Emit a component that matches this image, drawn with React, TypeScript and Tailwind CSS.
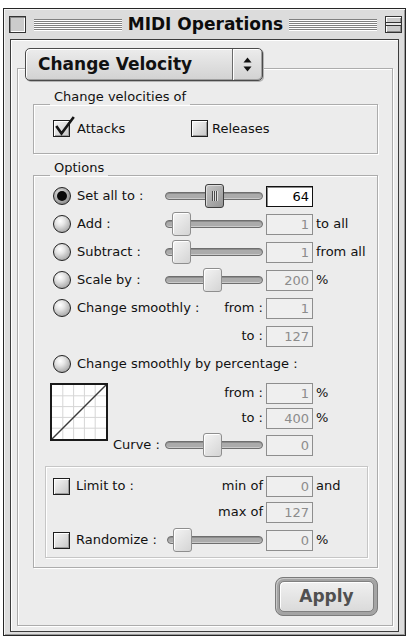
import React from "react";

function Radio({ checked = false }: { checked?: boolean }) {
  return (
    <div
      className={`w-[18px] h-[18px] shrink-0 rounded-full border border-[#222] flex items-center justify-center ${
        checked
          ? "bg-[radial-gradient(circle_at_40%_35%,#e6e6e6_0%,#9a9a9a_65%,#666666_100%)]"
          : "bg-[radial-gradient(circle_at_38%_32%,#ffffff_0%,#e6e6e6_30%,#a8a8a8_78%,#8a8a8a_100%)]"
      }`}
    >
      {checked && <div className="w-[10px] h-[10px] rounded-full bg-[#0a0a0a]" />}
    </div>
  );
}

function Checkbox({ checked = false }: { checked?: boolean }) {
  return (
    <div className="relative w-[17px] h-[17px] shrink-0 border border-[#1e1e1e] bg-[linear-gradient(135deg,#f6f6f6,#c6c6c6)] shadow-[inset_1px_1px_0_#ffffff,inset_-1px_-1px_0_#9a9a9a]">
      {checked && (
        <svg className="absolute left-0 top-[-5px]" width="22" height="22" viewBox="0 0 22 22">
          <path d="M3 11 L7.5 17.5 L19 2" stroke="#151515" strokeWidth="2.6" fill="none" strokeLinecap="square" strokeLinejoin="miter" />
        </svg>
      )}
    </div>
  );
}

function Slider({ pos, active = false, narrow = false }: { pos: number; active?: boolean; narrow?: boolean }) {
  return (
    <div className={`relative h-[24px] flex items-center shrink-0 ${narrow ? "w-[96px]" : "w-[98px]"}`}>
      <div className="w-full h-[8px] rounded-full border border-[#6e6e6e] bg-[#ababab] shadow-[inset_0_1px_0_#8c8c8c,inset_0_-1px_0_#cacaca]" />
      <div
        className={`absolute top-0 h-[24px] w-[19px] rounded-[3px] border flex items-center justify-center gap-[1px] ${
          active
            ? "border-[#3e3e3e] bg-[linear-gradient(135deg,#c6c6c6,#949494)] shadow-[inset_1px_1px_0_#dcdcdc]"
            : "border-[#8e8e8e] bg-[linear-gradient(135deg,#f4f4f4,#d4d4d4)] shadow-[inset_1px_1px_0_#ffffff]"
        }`}
        style={{ left: pos }}
      >
        {active &&
          [0, 1, 2].map((i) => (
            <div key={i} className="w-[1px] h-[10px] bg-[#4a4a4a] shadow-[1px_0_0_#dedede]" />
          ))}
      </div>
    </div>
  );
}

function Field({ v, active = false }: { v: string; active?: boolean }) {
  return (
    <div
      className={`w-[47px] h-[21px] shrink-0 border flex items-center justify-end pr-[3px] leading-none ${
        active
          ? "border-[#111] bg-white text-black shadow-[inset_1px_1px_0_#8a8a8a]"
          : "border-[#8e8e8e] bg-[#efefef] text-[#8c8c8c]"
      }`}
    >
      {v}
    </div>
  );
}

function Stripes() {
  return (
    <div className="flex-1 flex flex-col gap-[1px]">
      {[0, 1, 2, 3, 4, 5].map((i) => (
        <div key={i} className="h-[1px] bg-[#808080] shadow-[0_1px_0_#ffffff]" />
      ))}
    </div>
  );
}

function SliderRow({
  label,
  pos,
  v,
  suffix,
  checked = false,
}: {
  label: string;
  pos: number;
  v: string;
  suffix?: string;
  checked?: boolean;
}) {
  return (
    <div className="flex items-center h-[28px] pl-[19px]">
      <Radio checked={checked} />
      <div className="w-[94px] pl-[6px] whitespace-nowrap">{label}</div>
      <Slider pos={pos} active={checked} />
      <div className="ml-[3px]">
        <Field v={v} active={checked} />
      </div>
      {suffix && <span className="ml-[3px] whitespace-nowrap">{suffix}</span>}
    </div>
  );
}

export default function App() {
  return (
    <div className="min-h-screen bg-white pt-[8px] pl-[3px] font-['DejaVu_Sans',sans-serif] text-[13px] text-[#111]">
      <div className="w-[403px] h-[628px] border border-[#262626] bg-[#dcdcdc] flex flex-col shadow-[inset_1px_1px_0_#f6f6f6,inset_-1px_-1px_0_#9a9a9a]">
        {/* Title bar */}
        <div className="h-[30px] shrink-0 flex items-center pl-[5px] pr-[3px]">
          <div className="w-[17px] h-[17px] shrink-0 border border-[#333] bg-[#cbcbcb] shadow-[inset_1px_1px_0_#8a8a8a,inset_-1px_-1px_0_#ffffff]" />
          <div className="flex-1 ml-[8px] flex">
            <Stripes />
          </div>
          <div className="px-[6px] font-bold text-[17px] leading-none text-[#0c0c0c] whitespace-nowrap">
            MIDI Operations
          </div>
          <div className="flex-1 mr-[8px] flex">
            <Stripes />
          </div>
          <div className="w-[17px] h-[17px] shrink-0 border border-[#333] bg-[#cbcbcb] shadow-[inset_1px_1px_0_#ffffff,inset_-1px_-1px_0_#8a8a8a] flex flex-col justify-center">
            <div className="h-[4px] border-y border-[#333] bg-[#e8e8e8]" />
          </div>
        </div>

        {/* Content */}
        <div className="mx-[6px] mb-[3px] h-[593px] border border-[#3c3c3c] bg-[#ececec] shadow-[inset_1px_1px_0_#ffffff] flex flex-col pt-[8px]">
          {/* Popup */}
          <div className="relative z-10 ml-[14px] w-[238px] h-[33px] shrink-0 rounded-[5px] border border-[#4a4a4a] bg-[linear-gradient(180deg,#ececec,#d2d2d2)] shadow-[inset_1px_1px_0_#ffffff,inset_-1px_-1px_0_#a0a0a0,1px_1px_0_#b4b4b4] flex">
            <div className="flex-1 flex items-center pl-[12px] font-bold text-[17px] leading-none text-[#111] whitespace-nowrap">
              Change Velocity
            </div>
            <div className="w-[30px] border-l border-[#6a6a6a] flex items-center justify-center shadow-[inset_1px_0_0_#ffffff]">
              <svg width="9" height="15" viewBox="0 0 9 15">
                <path d="M4.5 0.5 L8.5 5.5 L0.5 5.5 Z" fill="#111" />
                <path d="M0.5 9.5 L8.5 9.5 L4.5 14.5 Z" fill="#111" />
              </svg>
            </div>
          </div>

          {/* Outer frame */}
          <div className="-mt-[13px] ml-[6px] w-[376px] h-[558px] shrink-0 border border-[#acacac] shadow-[inset_1px_1px_0_#ffffff,1px_1px_0_#ffffff] flex flex-col">
            {/* Change velocities of */}
            <div className="relative mt-[35px] ml-[15px] w-[345px] h-[50px] shrink-0 border border-[#acacac] shadow-[inset_1px_1px_0_#ffffff,1px_1px_0_#ffffff]">
              <div className="absolute left-[16px] -top-[16px] px-[4px] bg-[#ececec] leading-[16px] whitespace-nowrap">
                Change velocities of
              </div>
              <div className="h-full flex items-center pl-[19px] pb-[1px]">
                <Checkbox checked />
                <div className="w-[121px] pl-[7px]">Attacks</div>
                <Checkbox />
                <div className="pl-[4px]">Releases</div>
              </div>
            </div>

            {/* Options */}
            <div className="relative mt-[21px] ml-[15px] w-[345px] h-[393px] shrink-0 border border-[#acacac] shadow-[inset_1px_1px_0_#ffffff,1px_1px_0_#ffffff] flex flex-col pt-[6px]">
              <div className="absolute left-[16px] -top-[16px] px-[4px] bg-[#ececec] leading-[16px]">Options</div>

              <SliderRow label="Set all to :" pos={40} v="64" checked />
              <SliderRow label="Add :" pos={7} v="1" suffix="to all" />
              <SliderRow label="Subtract :" pos={7} v="1" suffix="from all" />
              <SliderRow label="Scale by :" pos={38} v="200" suffix="%" />

              <div className="flex items-center h-[28px] pl-[19px]">
                <Radio />
                <div className="w-[195px] flex items-center">
                  <span className="pl-[6px] whitespace-nowrap">Change smoothly :</span>
                  <span className="ml-auto pr-[3px]">from :</span>
                </div>
                <Field v="1" />
              </div>
              <div className="flex items-center h-[28px] pl-[37px]">
                <div className="w-[195px] text-right pr-[3px]">to :</div>
                <Field v="127" />
              </div>

              <div className="flex items-center h-[28px] pl-[19px]">
                <Radio />
                <span className="pl-[6px] whitespace-nowrap">Change smoothly by percentage :</span>
              </div>

              {/* Curve section */}
              <div className="flex h-[82px] shrink-0">
                <div className="ml-[16px] mt-[5px] w-[58px] h-[58px] shrink-0 border-2 border-[#1a1a1a] bg-white">
                  <svg width="54" height="54" viewBox="0 0 54 54" className="block">
                    {[10.8, 21.6, 32.4, 43.2].map((p) => (
                      <g key={p}>
                        <line x1={p} y1="0" x2={p} y2="54" stroke="#d6d6d6" strokeWidth="1" />
                        <line x1="0" y1={p} x2="54" y2={p} stroke="#d6d6d6" strokeWidth="1" />
                      </g>
                    ))}
                    <line x1="0" y1="54" x2="54" y2="0" stroke="#3a3a3a" strokeWidth="1.4" />
                  </svg>
                </div>
                <div className="flex flex-col pt-[2px]">
                  <div className="flex items-center h-[26px]">
                    <div className="w-[158px] text-right pr-[3px]">from :</div>
                    <Field v="1" />
                    <span className="ml-[3px]">%</span>
                  </div>
                  <div className="flex items-center h-[24px]">
                    <div className="w-[158px] text-right pr-[3px]">to :</div>
                    <Field v="400" />
                    <span className="ml-[3px]">%</span>
                  </div>
                  <div className="flex items-center h-[30px]">
                    <div className="w-[57px] pl-[5px] whitespace-nowrap">Curve :</div>
                    <Slider pos={38} />
                    <div className="ml-[3px]">
                      <Field v="0" />
                    </div>
                  </div>
                </div>
              </div>

              {/* Limit / Randomize box */}
              <div className="mt-[6px] ml-[11px] w-[323px] h-[92px] shrink-0 border border-[#c6c6c6] shadow-[inset_1px_1px_0_#ffffff,1px_1px_0_#ffffff] flex flex-col pt-[6px]">
                <div className="flex items-center h-[26px] pl-[7px]">
                  <Checkbox />
                  <div className="w-[196px] flex items-center">
                    <span className="pl-[6px] whitespace-nowrap">Limit to :</span>
                    <span className="ml-auto pr-[3px] whitespace-nowrap">min of</span>
                  </div>
                  <Field v="0" />
                  <span className="ml-[3px]">and</span>
                </div>
                <div className="flex items-center h-[26px] pl-[24px]">
                  <div className="w-[196px] text-right pr-[3px] whitespace-nowrap">max of</div>
                  <Field v="127" />
                </div>
                <div className="flex items-center h-[30px] pl-[7px]">
                  <Checkbox />
                  <div className="w-[97px] pl-[6px] whitespace-nowrap">Randomize :</div>
                  <Slider pos={6} narrow />
                  <div className="ml-[3px]">
                    <Field v="0" />
                  </div>
                  <span className="ml-[3px]">%</span>
                </div>
              </div>
            </div>

            {/* Apply */}
            <div className="mt-[9px] flex justify-end pr-[14px]">
              <div className="w-[103px] h-[39px] rounded-[8px] border border-[#7a7a7a] bg-[#a4a4a4] p-[3px] shadow-[inset_1px_1px_0_#c8c8c8]">
                <div className="w-full h-full rounded-[5px] border border-[#808080] bg-[linear-gradient(180deg,#f0f0f0,#dadada)] shadow-[inset_1px_1px_0_#ffffff] flex items-center justify-center font-bold text-[17px] leading-none text-[#505050]">
                  Apply
                </div>
              </div>
            </div>
          </div>
        </div>
      </div>
    </div>
  );
}
